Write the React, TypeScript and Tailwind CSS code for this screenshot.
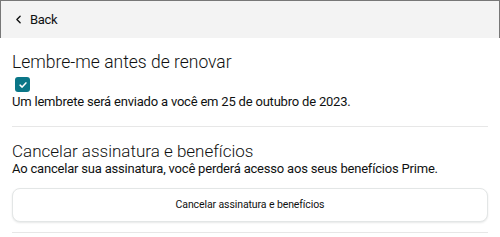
import { ChevronLeft } from 'lucide-react';

export default function App() {
  return (
    <div className="w-[500px] h-[237px] overflow-hidden bg-white font-['Roboto',sans-serif] text-[#0f1111]">
      <header className="h-[38px] bg-[#f3f3f3] border-t border-x border-[#777777] border-b-[#e0e0e0] flex items-center pl-[11px]">
        <button className="flex items-center gap-[5px] text-[13px] tracking-[-0.3px] text-[#0f1111]">
          <ChevronLeft className="w-[13px] h-[13px]" strokeWidth={2.5} />
          Back
        </button>
      </header>

      <div className="px-3">
        <section className="pt-[14px] pb-[16px] border-b border-[#e7e7e7]">
          <h2 className="text-[17.5px] font-light leading-[20px]">Lembre-me antes de renovar</h2>
          <div className="mt-[5px] ml-[3px] w-[15px] h-[15px] rounded-[3px] bg-[#0a7687] flex items-center justify-center">
            <svg viewBox="0 0 12 12" className="w-[10px] h-[10px]">
              <path d="M2.5 6.2 L5 8.5 L9.5 3.5" fill="none" stroke="white" strokeWidth="1.8" strokeLinecap="round" strokeLinejoin="round" />
            </svg>
          </div>
          <p className="text-[13px] tracking-[-0.2px] leading-[16px] mt-[2px]">Um lembrete será enviado a você em 25 de outubro de 2023.</p>
        </section>

        <section className="pt-[14px] pb-[10px] border-b border-[#e7e7e7]">
          <h2 className="text-[17px] font-light leading-[20px]">Cancelar assinatura e benefícios</h2>
          <p className="text-[13px] tracking-[-0.2px] leading-[16px]">Ao cancelar sua assinatura, você perderá acesso aos seus benefícios Prime.</p>
          <button className="mt-[11px] w-full h-[34px] rounded-[8px] border border-[#e3e6e6] bg-white shadow-[0_1px_2px_rgba(213,217,217,0.6)] text-[10.5px] tracking-[-0.1px] text-[#0f1111]">
            Cancelar assinatura e benefícios
          </button>
        </section>
      </div>
    </div>
  );
}
